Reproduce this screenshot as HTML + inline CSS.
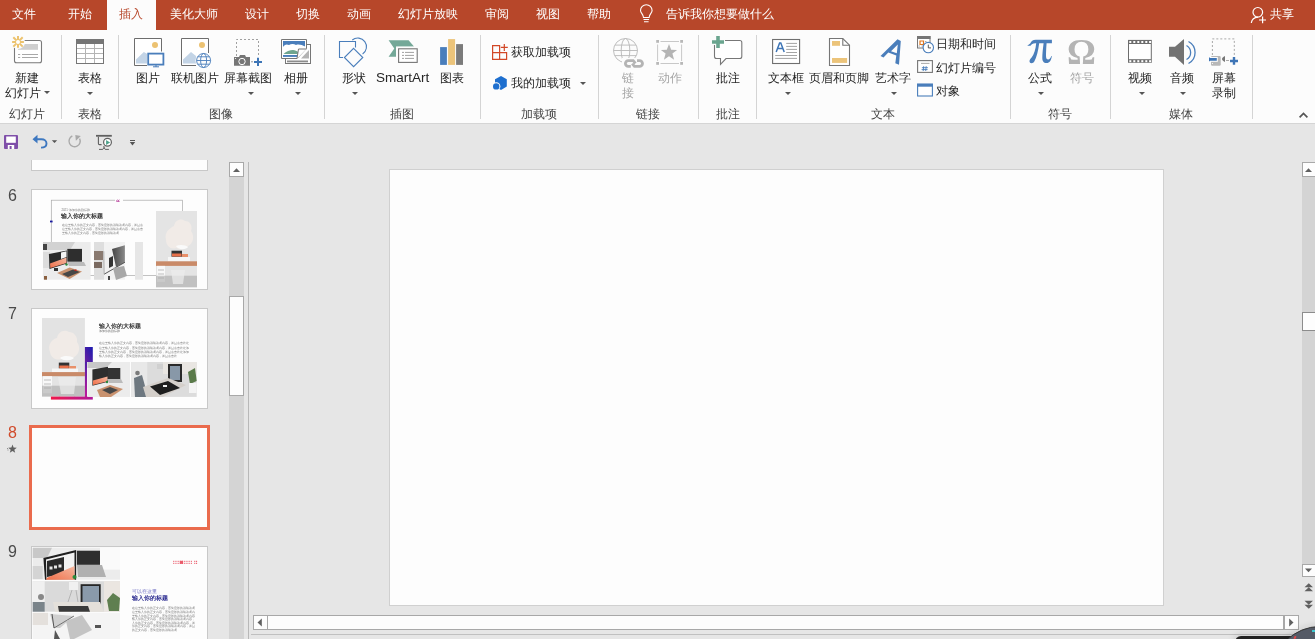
<!DOCTYPE html>
<html><head><meta charset="utf-8"><style>
html,body{margin:0;padding:0}
body{width:1315px;height:639px;overflow:hidden;background:#e6e6e6;font-family:"Liberation Sans",sans-serif;position:relative}
.a{position:absolute}
.t{position:absolute;font-size:12px;line-height:12px;white-space:nowrap;color:#262626;will-change:transform}
.tab{position:absolute;top:8px;font-size:12px;line-height:12px;color:#fff;white-space:nowrap;will-change:transform}
.sep{position:absolute;top:35px;width:1px;height:84px;background:#d4d4d4}
.gl{position:absolute;top:108px;font-size:12px;line-height:12px;color:#444;white-space:nowrap;will-change:transform}
.dd{position:absolute;width:0;height:0;border-left:3px solid transparent;border-right:3px solid transparent;border-top:3px solid #555}
.dis{color:#a6a6a6}
.thumb{position:absolute;left:31px;width:175px;height:99px;background:#fdfdfd;border:1px solid #c8c8c8;overflow:hidden}
.num{position:absolute;left:8px;font-size:16px;line-height:16px;color:#4a4a4a;will-change:transform}
svg{position:absolute;overflow:visible}
</style></head><body>

<!-- TAB BAR -->
<div class="a" style="left:0;top:0;width:1315px;height:30px;background:#b7472a"></div>
<div class="a" style="left:107px;top:0;width:49px;height:30px;background:#fcfcfc"></div>
<div class="tab" style="left:12px">文件</div>
<div class="tab" style="left:68px">开始</div>
<div class="tab" style="left:119px;color:#b7472a">插入</div>
<div class="tab" style="left:170px">美化大师</div>
<div class="tab" style="left:245px">设计</div>
<div class="tab" style="left:296px">切换</div>
<div class="tab" style="left:347px">动画</div>
<div class="tab" style="left:398px">幻灯片放映</div>
<div class="tab" style="left:485px">审阅</div>
<div class="tab" style="left:536px">视图</div>
<div class="tab" style="left:587px">帮助</div>
<div class="tab" style="left:666px">告诉我你想要做什么</div>
<div class="tab" style="left:1270px">共享</div>

<!-- RIBBON -->
<div class="a" style="left:0;top:30px;width:1315px;height:93px;background:#fcfcfc"></div>
<div class="a" style="left:0;top:123px;width:1315px;height:1px;background:#d5d5d5"></div>

<div class="sep" style="left:61px"></div>
<div class="sep" style="left:118px"></div>
<div class="sep" style="left:324px"></div>
<div class="sep" style="left:480px"></div>
<div class="sep" style="left:598px"></div>
<div class="sep" style="left:698px"></div>
<div class="sep" style="left:756px"></div>
<div class="sep" style="left:1010px"></div>
<div class="sep" style="left:1110px"></div>
<div class="sep" style="left:1252px"></div>

<!-- group labels -->
<div class="gl" style="left:9px">幻灯片</div>
<div class="gl" style="left:78px">表格</div>
<div class="gl" style="left:209px">图像</div>
<div class="gl" style="left:390px">插图</div>
<div class="gl" style="left:521px">加载项</div>
<div class="gl" style="left:636px">链接</div>
<div class="gl" style="left:716px">批注</div>
<div class="gl" style="left:871px">文本</div>
<div class="gl" style="left:1048px">符号</div>
<div class="gl" style="left:1169px">媒体</div>

<!-- button labels -->
<div class="t" style="left:15px;top:72px">新建</div>
<div class="t" style="left:5px;top:87px">幻灯片</div>
<div class="dd" style="left:44px;top:91px"></div>
<div class="t" style="left:78px;top:72px">表格</div>
<div class="dd" style="left:87px;top:92px"></div>
<div class="t" style="left:136px;top:72px">图片</div>
<div class="t" style="left:171px;top:72px">联机图片</div>
<div class="t" style="left:224px;top:72px">屏幕截图</div>
<div class="dd" style="left:248px;top:92px"></div>
<div class="t" style="left:284px;top:72px">相册</div>
<div class="dd" style="left:295px;top:92px"></div>
<div class="t" style="left:342px;top:72px">形状</div>
<div class="dd" style="left:352px;top:92px"></div>
<div class="t" style="left:376px;top:71px;font-size:13.5px;line-height:14px">SmartArt</div>
<div class="t" style="left:440px;top:72px">图表</div>
<div class="t" style="left:511px;top:46px">获取加载项</div>
<div class="t" style="left:511px;top:77px">我的加载项</div>
<div class="dd" style="left:580px;top:82px"></div>
<div class="t dis" style="left:622px;top:72px">链</div>
<div class="t dis" style="left:622px;top:87px">接</div>
<div class="t dis" style="left:658px;top:72px">动作</div>
<div class="t" style="left:716px;top:72px">批注</div>
<div class="t" style="left:768px;top:72px">文本框</div>
<div class="dd" style="left:785px;top:92px"></div>
<div class="t" style="left:809px;top:72px">页眉和页脚</div>
<div class="t" style="left:875px;top:72px">艺术字</div>
<div class="dd" style="left:891px;top:92px"></div>
<div class="t" style="left:936px;top:38px">日期和时间</div>
<div class="t" style="left:936px;top:62px">幻灯片编号</div>
<div class="t" style="left:936px;top:85px">对象</div>
<div class="t" style="left:1028px;top:72px">公式</div>
<div class="dd" style="left:1038px;top:92px"></div>
<div class="t dis" style="left:1070px;top:72px">符号</div>
<div class="a" style="left:1067px;top:32px;font-family:'Liberation Serif',serif;font-weight:bold;font-size:36px;line-height:40px;color:#b4b4b4">Ω</div>
<div class="t" style="left:1128px;top:72px">视频</div>
<div class="dd" style="left:1139px;top:92px"></div>
<div class="t" style="left:1170px;top:72px">音频</div>
<div class="dd" style="left:1180px;top:92px"></div>
<div class="t" style="left:1212px;top:72px">屏幕</div>
<div class="t" style="left:1212px;top:87px">录制</div>

<!-- LEFT PANEL -->
<div class="a" style="left:0;top:160px;width:229px;height:479px;overflow:hidden">
<div class="thumb" style="top:-90px"></div>
<div class="num" style="top:28px">6</div>
<div class="thumb" style="top:29px"></div>
<div class="num" style="top:146px">7</div>
<div class="thumb" style="top:148px"></div>
<div class="num" style="top:265px;color:#d04a2a">8</div>
<div class="a" style="left:29px;top:265px;width:175px;height:99px;border:3px solid #ea6b4d;background:#fdfdfd"></div>
<div class="num" style="top:384px">9</div>
<div class="thumb" style="top:386px"></div>
<!-- THUMBS -->
<svg width="229" height="479" viewBox="0 160 229 479" style="left:0;top:0">
<defs>
<linearGradient id="gb" x1="0" x2="1" y1="0" y2="0"><stop offset="0" stop-color="#f0194a"/><stop offset="1" stop-color="#b0189a"/></linearGradient>
<linearGradient id="gp" x1="1" x2="0" y1="0" y2="1"><stop offset="0" stop-color="#1a1ab0"/><stop offset="1" stop-color="#6a20a0"/></linearGradient>
<linearGradient id="gl" x1="0" x2="0" y1="0" y2="1"><stop offset="0" stop-color="#5020a8"/><stop offset="1" stop-color="#c0189a"/></linearGradient>
<linearGradient id="gm" x1="0" x2="1" y1="0" y2="0"><stop offset="0" stop-color="#444"/><stop offset="1" stop-color="#8a8a8a"/></linearGradient>
<linearGradient id="go" x1="0" x2="1" y1="1" y2="0"><stop offset="0" stop-color="#f0704a"/><stop offset="1" stop-color="#f5b8a0"/></linearGradient>
</defs>
<!-- ===== slide 6 ===== -->
<rect x="51.3" y="200.2" width="131.2" height="75.3" fill="none" stroke="#a8a8a8" stroke-width="0.7"/>
<rect x="115" y="197" width="8" height="6" fill="#fdfdfd"/>
<text x="116" y="204.5" font-family="Liberation Serif" font-weight="bold" font-size="8" fill="#b02a90">“</text>
<rect x="50" y="220.6" width="2.6" height="1.8" fill="#1a1aa0"/>
<text x="61.5" y="211.3" font-size="2.8" fill="#777" font-family="Liberation Sans">2021·添加你的副标题</text>
<text x="61.3" y="218.4" font-size="6.1" font-weight="bold" fill="#333" font-family="Liberation Sans">输入你的大标题</text>
<text x="61.5" y="226.3" font-size="3.05" fill="#777" font-family="Liberation Sans">在这里输入你的正文内容，言简意赅的说明该项内容，并且点</text>
<text x="61.5" y="229.9" font-size="3.05" fill="#777" font-family="Liberation Sans">这里输入你的正文内容，言简意赅的说明该项内容，并且点击</text>
<text x="61.5" y="233.5" font-size="3.05" fill="#777" font-family="Liberation Sans">里输入你的正文内容，言简意赅的说明该项</text>
<!-- img1 -->
<rect x="43" y="242" width="47.6" height="37.7" fill="#ececec"/>
<path d="M43,242 H75 L70,250 H43 Z" fill="#d2d2d2"/>
<rect x="43" y="244" width="4" height="6" fill="#444"/>
<path d="M43,252 H50 V268 H43 Z" fill="#dcdcdc"/>
<path d="M48.9,254.1 L67,250.5 V263.5 L49.5,269 Z" fill="#2a2a2a"/>
<path d="M61,252.5 L66.5,251.3 V257 L61,259 Z" fill="#f4f4f4"/>
<path d="M50,263.5 L66.5,257.5 V263 L50.3,268 Z" fill="url(#go)"/>
<rect x="54" y="268" width="4" height="3" fill="#333"/>
<rect x="67.3" y="248.9" width="14.7" height="12.8" fill="#2e2e2e"/>
<path d="M67,262 H84 L86,266 H69 Z" fill="#bbbbbb"/>
<circle cx="66.5" cy="264.5" r="1.2" fill="#2a8a3a"/>
<path d="M57.1,272.9 L69.6,267.6 L82,271.5 L69.6,279.1 Z" fill="#c9926f"/>
<path d="M62,274 L73,269.5 L80,272 L68,277 Z" fill="#474747"/>
<rect x="74.5" y="269.5" width="2" height="1.5" fill="#c02020"/>
<rect x="44" y="276" width="3" height="3.7" fill="#8a6040"/>
<!-- img2 -->
<rect x="94" y="242" width="31" height="37.7" fill="#f2f2f2"/>
<rect x="94" y="242" width="10" height="37.7" fill="#dedede"/>
<rect x="94" y="251" width="9" height="9" fill="#8a7a70"/>
<rect x="94" y="262" width="8" height="6" fill="#7a6a60"/>
<path d="M103.8,251.2 L124.9,245.3 V262.3 L104.2,274.2 Z" fill="#f0f0f0"/>
<path d="M112,249 L124.9,245.3 V262.3 L116,267 Z" fill="url(#gm)"/>
<path d="M109,258 L113,256 V266 L109,268 Z" fill="#333"/>
<path d="M104.2,274.2 L124.9,262.3" stroke="#333" stroke-width="0.8"/>
<path d="M103.8,251.2 L104.2,274.2" stroke="#888" stroke-width="0.6"/>
<path d="M113,268 L124,266 L127,276 L116,280 Z" fill="#a8a8a8"/>
<rect x="108" y="276" width="2" height="4" fill="#444"/>
<rect x="135" y="242" width="8" height="37.7" fill="#e6e6e6"/>
<!-- img3 -->
<rect x="156" y="211" width="41" height="76.3" fill="#e4e4e4"/>
<path d="M166,240 C164,232 170,228 174,226 C175,220 181,218 185,221 C190,221 193,226 191,231 C195,236 193,244 188,246 C186,250 180,250 176,248 C171,250 166,246 166,240 Z" fill="#f1ebe7"/><path d="M176,246 C180,244 186,245 188,247 C186,250 178,250 176,246 Z" fill="#fafafa"/>
<rect x="171.5" y="250.7" width="10.5" height="6" fill="#333"/>
<rect x="172" y="253.5" width="9.5" height="3" fill="#e8704a"/>
<rect x="182" y="254" width="6" height="5" fill="#e8906a"/>
<rect x="168" y="257" width="22" height="4.3" fill="#f6f6f6"/>
<rect x="156" y="261.3" width="41" height="4.6" fill="#c98a68"/>
<rect x="157" y="265.9" width="8" height="16" fill="#f8f8f8"/>
<path d="M158,270 H164 M158,274 H164 M158,278 H164" stroke="#999" stroke-width="0.6"/>

<rect x="156" y="275.7" width="41" height="11.6" fill="#a4a4a4" opacity="0.55"/>
<path d="M171,270 H185 L183,284 H173 Z" fill="#ececec" opacity="0.7"/>

<!-- ===== slide 7 ===== -->
<rect x="42" y="318" width="42.9" height="78.6" fill="#e3e3e3"/>
<path d="M50,352 C47,345 52,339 57,338 C58,332 64,329 69,332 C74,332 78,337 77,342 C81,347 79,355 74,357 C72,361 65,361 62,359 C56,361 51,358 50,352 Z" fill="#f1ebe7"/><path d="M60,358 C64,355 71,356 74,358 C71,361 63,361 60,358 Z" fill="#fafafa"/>
<rect x="58.8" y="362.6" width="10.5" height="6" fill="#333"/>
<rect x="59.3" y="365.5" width="9.5" height="3" fill="#e8704a"/>
<rect x="69" y="366" width="7" height="5" fill="#e8906a"/>
<rect x="52" y="368.5" width="26" height="3.6" fill="#f6f6f6"/>
<rect x="42" y="372.1" width="42.9" height="4.1" fill="#c98a68"/>
<rect x="43" y="376.2" width="9" height="17" fill="#f8f8f8"/>
<path d="M44,380 H51 M44,384 H51 M44,388 H51" stroke="#999" stroke-width="0.6"/>
<rect x="42" y="385.7" width="42.9" height="10.9" fill="#a4a4a4" opacity="0.55"/>
<path d="M58,377 H76 L74,394 H61 Z" fill="#ececec" opacity="0.7"/><path d="M61,394 L59,397 M73,394 L75,397" stroke="#bbb" stroke-width="0.5"/>
<rect x="84.9" y="347" width="7.9" height="15" fill="url(#gp)"/>
<rect x="84.9" y="362" width="2.1" height="35" fill="url(#gl)"/>
<rect x="50.9" y="396.6" width="41.9" height="3" fill="url(#gb)"/>
<!-- img2 -->
<rect x="87.5" y="362" width="42.5" height="34.9" fill="#ececec"/>
<path d="M87.5,362 H112 L106,368 H87.5 Z" fill="#c8c8c8"/>
<path d="M92.4,369.4 L108,366.7 V381.7 L92.4,385.7 Z" fill="#2e2e2e"/>
<path d="M93,380.5 L107.5,376.5 V381.3 L93,385 Z" fill="url(#go)"/>
<rect x="108" y="368" width="12.3" height="11" fill="#333"/>
<path d="M107,379 H121 L123,383 H109 Z" fill="#bbb"/>
<circle cx="107" cy="382" r="1.2" fill="#2a8a3a"/>
<path d="M97,390 L110,385 L123,389 L111,396.9 H100 Z" fill="#c9926f"/>
<path d="M102,390 L110,387 L118,390 L110,394 Z" fill="#474747"/>
<!-- img3 -->
<rect x="131.2" y="362" width="65.5" height="34.9" fill="#dcdcdc"/>
<rect x="131.2" y="362" width="16" height="34.9" fill="#e8e8e8"/>
<rect x="163" y="362" width="33.7" height="12" fill="#e9e6e2"/>
<path d="M134,378 L142,375 L148,396.9 H135 Z" fill="#6e7880"/>
<circle cx="137.5" cy="373" r="2.3" fill="#7a7a7a"/>
<rect x="157" y="364" width="6" height="5" fill="#d0d0d0"/>
<rect x="168" y="364" width="14" height="18" fill="#2a2a2a"/>
<rect x="170" y="366" width="10" height="14" fill="#8898a8"/>
<path d="M143,387 L168,378 L186,385 L163,396.9 H146 Z" fill="#d4cfca"/>
<path d="M150,386.5 L168,381 L180,388 L160,395 Z" fill="#1e1e1e"/>
<rect x="163" y="385" width="4" height="2" fill="#eee"/>
<path d="M188,372 L195,368 L196.7,381 L190,384 Z" fill="#5a7a4a"/>
<rect x="189" y="383" width="7.5" height="10" fill="#f4f4f4"/>
<text x="99.2" y="327.8" font-size="5.5" font-weight="bold" fill="#333" font-family="Liberation Sans">输入你的大标题</text>
<text x="99.3" y="332.3" font-size="3.2" fill="#666" font-family="Liberation Sans">添加你的副标题</text>
<text x="99.3" y="344.3" font-size="3.05" fill="#777" font-family="Liberation Sans">在这里输入你的正文内容，言简意赅的说明该项内容，并且点击此处</text>
<text x="99.3" y="348.6" font-size="3.05" fill="#777" font-family="Liberation Sans">这里输入你的正文内容，言简意赅的说明该项内容，并且点击此处添</text>
<text x="99.3" y="352.9" font-size="3.05" fill="#777" font-family="Liberation Sans">里输入你的正文内容，言简意赅的说明该项内容，并且点击此处添加</text>
<text x="99.3" y="357.2" font-size="3.05" fill="#777" font-family="Liberation Sans">输入你的正文内容，言简意赅的说明该项内容，并且点击此</text>

<!-- ===== slide 9 ===== -->
<rect x="32.7" y="547.7" width="87.3" height="32" fill="#ececec"/>
<path d="M32.7,547.7 H52 L47,558 H32.7 Z" fill="#c8c8c8"/>
<rect x="32.7" y="566" width="10" height="13" fill="#d4d4d4"/>
<rect x="100" y="547.7" width="20" height="22" fill="#fafafa"/>
<path d="M43.4,558.1 L76.1,550 V579.7 H45 Z" fill="#1e1e1e"/>
<path d="M46,559.5 L74.5,552.5 V579.7 H46.5 Z" fill="#f2f2f2"/>
<path d="M47,561 L64,557 V574 L47,577 Z" fill="#2a2a2a"/>
<rect x="49.5" y="566.5" width="3" height="3" fill="#e6e6e6"/><rect x="54" y="565.5" width="3" height="3" fill="#e6e6e6"/><rect x="58.5" y="564.5" width="3" height="3" fill="#e6e6e6"/>
<path d="M46.5,578 L74.5,566 V579.7 H46.5 Z" fill="url(#go)"/>
<rect x="76.9" y="550.7" width="23.1" height="14.1" fill="#2e2e2e"/>
<path d="M77,565 H102 L106,577 H78 Z" fill="#b0b0b0"/>
<circle cx="74.5" cy="577" r="2" fill="#2a8a3a"/>
<rect x="32.7" y="581.2" width="87.3" height="30.5" fill="#dadada"/>
<rect x="32.7" y="581.2" width="12" height="30.5" fill="#f0f0f0"/>
<rect x="104" y="581.2" width="16" height="30.5" fill="#ebe6e1"/>
<circle cx="41" cy="597" r="3" fill="#888"/>
<rect x="32.7" y="602" width="12" height="9.7" fill="#7a848a"/>
<rect x="69" y="582" width="9" height="8" fill="#f0f0f0"/>
<path d="M72,590 L68,602 M76,590 L78,602" stroke="#999" stroke-width="0.6"/>
<rect x="80.6" y="584.2" width="20.1" height="20.8" fill="#262626"/>
<rect x="82.5" y="586" width="16.5" height="17" fill="#8a9aaa"/>
<path d="M53,602 H100 L104,611.7 H55 Z" fill="#e4e0da"/>
<path d="M58,606 H88 L90,611.7 H59 Z" fill="#3a3a3a"/>
<path d="M107,600 L113,593 L120,598 L119,611 H109 Z" fill="#5f7f50"/>
<rect x="32.7" y="612.8" width="87.3" height="26.2" fill="#f4f4f4"/>
<path d="M32.7,612.8 H48 V625 H32.7 Z" fill="#e4e0dc"/>
<path d="M50,614 L74,616 L60,628 L54,628 Z" fill="#d0d0d0"/>
<path d="M52,614 L54,628" stroke="#333" stroke-width="0.8"/>
<path d="M54,628 L74,616" stroke="#333" stroke-width="0.6"/>
<path d="M66,621 L82,615 L92,630 L74,639 H70 Z" fill="#c4c4c4"/>
<rect x="95" y="625" width="6" height="3" fill="#555"/>
<path d="M55,630 L60,639 H54 Z" fill="#555"/>
<g fill="#ea5a6a">
<rect x="173.2" y="560.8" width="1.1" height="1.1"/>
<rect x="175.4" y="560.8" width="1.1" height="1.1"/>
<rect x="177.6" y="560.8" width="1.1" height="1.1"/>
<rect x="179.8" y="560.8" width="1.1" height="1.1"/>
<rect x="182.0" y="560.8" width="1.1" height="1.1"/>
<rect x="184.2" y="560.8" width="1.1" height="1.1"/>
<rect x="186.4" y="560.8" width="1.1" height="1.1"/>
<rect x="188.6" y="560.8" width="1.1" height="1.1"/>
<rect x="190.8" y="560.8" width="1.1" height="1.1"/>
<rect x="194.2" y="560.8" width="1.1" height="1.1"/>
<rect x="196.0" y="560.8" width="1.1" height="1.1"/>
<rect x="173.2" y="562.8" width="1.1" height="1.1"/>
<rect x="175.4" y="562.8" width="1.1" height="1.1"/>
<rect x="177.6" y="562.8" width="1.1" height="1.1"/>
<rect x="179.8" y="562.8" width="1.1" height="1.1"/>
<rect x="182.0" y="562.8" width="1.1" height="1.1"/>
<rect x="184.2" y="562.8" width="1.1" height="1.1"/>
<rect x="186.4" y="562.8" width="1.1" height="1.1"/>
<rect x="188.6" y="562.8" width="1.1" height="1.1"/>
<rect x="190.8" y="562.8" width="1.1" height="1.1"/>
<rect x="194.2" y="562.8" width="1.1" height="1.1"/>
<rect x="196.0" y="562.8" width="1.1" height="1.1"/>
<rect x="179.8" y="560.8" width="3.3" height="3.1"/>
</g>
<text x="132.2" y="593" font-size="5" fill="#7a7ac8" font-family="Liberation Sans">可以在这里</text>
<text x="132" y="599.6" font-size="6" font-weight="bold" fill="#2b2b90" font-family="Liberation Sans">输入你的标题</text>
<text x="132.2" y="609.3" font-size="3.05" fill="#777" font-family="Liberation Sans">在这里输入你的正文内容，言简意赅的说明该项</text>
<text x="132.2" y="612.9" font-size="3.05" fill="#777" font-family="Liberation Sans">这里输入你的正文内容，言简意赅的说明该项内</text>
<text x="132.2" y="616.5" font-size="3.05" fill="#777" font-family="Liberation Sans">里输入你的正文内容，言简意赅的说明该项内容</text>
<text x="132.2" y="620.1" font-size="3.05" fill="#777" font-family="Liberation Sans">输入你的正文内容，言简意赅的说明该项内容，</text>
<text x="132.2" y="623.7" font-size="3.05" fill="#777" font-family="Liberation Sans">入你的正文内容，言简意赅的说明该项内容，并</text>
<text x="132.2" y="627.3" font-size="3.05" fill="#777" font-family="Liberation Sans">你的正文内容，言简意赅的说明该项内容，并且</text>
<text x="132.2" y="630.9" font-size="3.05" fill="#777" font-family="Liberation Sans">的正文内容，言简意赅的说明该项</text>
</svg>
<!-- /THUMBS -->
</div>
<!-- QAT -->

<!-- panel scrollbar -->
<div class="a" style="left:229px;top:162px;width:15px;height:477px;background:#d4d4d4"></div>
<div class="a" style="left:229px;top:162px;width:13px;height:13px;background:#fdfdfd;border:1px solid #a8a8a8"></div>
<div class="a" style="left:229px;top:296px;width:13px;height:98px;background:#fdfdfd;border:1px solid #a8a8a8"></div>
<div class="a" style="left:248px;top:162px;width:1px;height:477px;background:#b8b8b8"></div>

<!-- MAIN SLIDE -->
<div class="a" style="left:389px;top:169px;width:773px;height:435px;background:#fdfdfd;border:1px solid #d0d0d0"></div>

<!-- right scrollbar -->
<div class="a" style="left:1302px;top:162px;width:13px;height:415px;background:#d4d4d4"></div>
<div class="a" style="left:1302px;top:162px;width:13px;height:13px;background:#fdfdfd;border:1px solid #a8a8a8"></div>
<div class="a" style="left:1302px;top:312px;width:13px;height:17px;background:#fdfdfd;border:1px solid #8c8c8c"></div>
<div class="a" style="left:1302px;top:564px;width:13px;height:11px;background:#fdfdfd;border:1px solid #a8a8a8"></div>

<!-- horizontal scrollbar -->
<div class="a" style="left:253px;top:615px;width:1044px;height:13px;background:#fdfdfd;border:1px solid #a8a8a8"></div>
<div class="a" style="left:267px;top:615px;width:1px;height:15px;background:#a8a8a8"></div>
<div class="a" style="left:1283px;top:615px;width:2px;height:15px;background:#a8a8a8"></div>
<div class="a" style="left:251px;top:634px;width:1064px;height:1px;background:#c0c0c0"></div>

<!-- ICONS -->
<svg width="1315" height="639" style="left:0;top:0">
<!-- tab bar: lightbulb -->
<g fill="none" stroke="#fff" stroke-width="1.1">
<path d="M643.5,17.5 C643.5,14.5 640.5,13 640.5,10.5 A5.8,5.8 0 0 1 652.1,10.5 C652.1,13 649.1,14.5 649.1,17.5 Z"/>
<path d="M643.5,19.5 H649.1 M644,21.7 H648.6"/>
</g>
<!-- share person -->
<g fill="none" stroke="#fff" stroke-width="1.2">
<circle cx="1257.8" cy="12.3" r="4.8"/>
<path d="M1251.3,23 C1251.8,19.5 1254.5,17.2 1258,17.1"/>
<path d="M1259,20 H1266 M1262.6,16.6 V23.2"/>
</g>

<!-- New slide -->
<rect x="14.5" y="40.5" width="27" height="22.3" rx="2" fill="#fff" stroke="#7a7a7a" stroke-width="1.1"/>
<rect x="18" y="44" width="20" height="5.8" fill="#cfcfcf"/>
<path d="M18,54.5 H20.2 M22,54.5 H38 M18,57.5 H20.2 M22,57.5 H38" stroke="#a8a8a8" stroke-width="1"/>
<circle cx="18" cy="42" r="7" fill="#fcfcfc"/>
<g stroke="#ecc36f" stroke-width="2">
<path d="M18,36.1 V47.7 M12.1,41.9 H23.9 M13.3,37.2 L22.7,46.6 M13.3,46.6 L22.7,37.2"/>
</g>
<circle cx="18" cy="41.9" r="2" fill="#fff"/>

<!-- Table -->
<rect x="76.5" y="39.5" width="27" height="24" fill="#fff" stroke="#767676" stroke-width="1"/>
<rect x="76" y="39" width="28" height="5" fill="#767676"/>
<path d="M85.5,44 V63 M94.5,44 V63 M77,48.5 H103 M77,53.5 H103 M77,58.5 H103" stroke="#b4b4b4" stroke-width="1"/>

<!-- Picture -->
<path d="M147,65.5 H134.5 V38.5 H161.5 V51.5" fill="#fff" stroke="#6d6d6d" stroke-width="1"/>
<circle cx="155" cy="45" r="3" fill="#ecc272"/>
<path d="M136,63.5 V59.5 L143.8,52 L147,53.8 V63.5 Z" fill="#c3d4e6"/>
<rect x="148.2" y="53.6" width="15.2" height="11" fill="#fff" stroke="#4a7ebb" stroke-width="1.8"/>
<path d="M153,66.8 H159 M155,66 H157" stroke="#4a7ebb" stroke-width="1"/>

<!-- Online picture -->
<path d="M196,65.5 H181.5 V38.5 H208.5 V53" fill="#fff" stroke="#6d6d6d" stroke-width="1"/>
<circle cx="202" cy="45" r="3" fill="#ecc272"/>
<path d="M183,63.5 V59.5 L191,52 L196,56 V63.5 Z" fill="#c3d4e6"/>
<circle cx="203.6" cy="60.5" r="8.2" fill="#fcfcfc"/>
<g fill="none" stroke="#4a7ebb" stroke-width="0.9">
<circle cx="203.6" cy="60.5" r="7"/>
<ellipse cx="203.6" cy="60.5" rx="3" ry="7"/>
<path d="M196.6,60.5 H210.6 M197.6,56.8 H209.6 M197.6,64.2 H209.6"/>
</g>

<!-- Screenshot -->
<path d="M236.5,56 V39.5 H258.5 V56" fill="none" stroke="#a0a0a0" stroke-width="1" stroke-dasharray="2,2"/>
<path d="M234,57 H239 L240,55 H245 L246,57 H250 V65.8 H234 Z" fill="#767676"/>
<circle cx="242" cy="61.5" r="3.2" fill="none" stroke="#fff" stroke-width="1"/>
<circle cx="235.5" cy="58.5" r="0.6" fill="#fff"/>
<path d="M251,61.8 H253" stroke="#999" stroke-width="1"/>
<path d="M254,61.9 H262 M258,57.8 V66" stroke="#3e75b6" stroke-width="2"/>

<!-- Album -->
<rect x="285.5" y="44.5" width="25" height="19" fill="#fff" stroke="#767676" stroke-width="1"/>
<rect x="287" y="60.5" width="21" height="1.8" fill="#8c8c8c"/>
<path d="M301,58.5 L309,50 V58.5 Z" fill="#b4b4b4"/>
<path d="M281.5,39.5 H306.5 V48.5 L297,58.5 H281.5 Z" fill="#fff" stroke="#767676" stroke-width="1"/>
<rect x="283" y="41" width="22" height="5.8" fill="#4a7ebb"/>
<path d="M283,47 C285,44 287,44 289,45 C291,43.5 294,43.5 296,45 C299,44 302,45 305,46.5 V48 H283 Z" fill="#fff"/>
<path d="M283.5,54 C286,51.5 290,50 293,50 C295,50 297,51 298,52 V54 Z" fill="#6fa58f"/>
<rect x="283" y="55" width="14" height="1.9" fill="#4a7ebb"/>
<path d="M297,58.5 L298.5,49 H306.5" fill="#fff" stroke="#767676" stroke-width="1"/>

<!-- Shapes -->
<g fill="none" stroke="#4a7ebb" stroke-width="1.1">
<path d="M343,57.5 H339.5 V41.5 H355.5 V47.5"/>
<path d="M352.3,40 A8.7,8.7 0 1 1 362.6,54"/>
<path d="M353.6,48.3 L362.8,57.5 L353.6,66.7 L344.4,57.5 Z"/>
</g>

<!-- SmartArt -->
<path d="M388.6,40.2 H408.6 L414,46.6 H396 V56.8 H388.6 L394.3,48.5 Z" fill="#74a898"/>
<rect x="396.5" y="46.8" width="22.5" height="17.5" fill="#fcfcfc"/>
<rect x="398.6" y="48.8" width="18.6" height="13.6" fill="#fff" stroke="#767676" stroke-width="1.1"/>
<path d="M402,52.4 H404 M405,52.4 H414 M402,55.4 H404 M405,55.4 H414 M402,58.4 H404 M405,58.4 H414" stroke="#a0a0a0" stroke-width="1"/>

<!-- Chart -->
<rect x="440.1" y="47.1" width="6.8" height="17.8" fill="#4a7ebb"/>
<rect x="448.1" y="39.1" width="7" height="25.8" fill="#ecc47a"/>
<rect x="456.1" y="44.1" width="6.9" height="20.8" fill="#7b7b7b"/>

<!-- Get add-ins -->
<g fill="none" stroke="#d24726" stroke-width="1.2">
<path d="M492.6,45.6 H499.6 V59.4 H492.6 Z M492.6,52.6 H506.6 V59.4 H499.6"/>
<path d="M500.8,47.4 H507.8 M504.3,43.9 V50.9"/>
</g>
<!-- My add-ins -->
<path d="M501,75.9 L506.8,79.3 V86.5 L501,89.9 L495,86.5 V79.3 Z" fill="#1e6fcf"/>
<circle cx="496.2" cy="86.4" r="4.2" fill="#fcfcfc"/>
<circle cx="496.2" cy="86.4" r="3.2" fill="#1e6fcf"/>

<!-- Link (disabled) -->
<g fill="none" stroke="#b8b8b8" stroke-width="0.9">
<circle cx="625.5" cy="50.5" r="12"/>
<ellipse cx="625.5" cy="50.5" rx="4.3" ry="12"/>
<path d="M613.5,50.5 H637.5 M615,45.1 H636 M615,55.6 H636"/>
</g>
<path d="M622,58 H646 V69 H622 Z" fill="#fcfcfc"/>
<g fill="none" stroke="#b4b4b4" stroke-width="2.8">
<path d="M635.5,63.4 L633.2,60.6 H628.3 A2.9,2.9 0 0 0 628.3,66.4 H630.8"/>
<path d="M632.2,63.6 L634.5,66.4 H639.6 A2.9,2.9 0 0 0 639.6,60.6 H637"/>
</g>

<!-- Action (disabled) -->
<g fill="#b8b8b8">
<rect x="656.2" y="40" width="2.8" height="2.8"/>
<rect x="680.2" y="40" width="2.8" height="2.8"/>
<rect x="656.2" y="62" width="2.8" height="2.8"/>
<rect x="680.2" y="62" width="2.8" height="2.8"/>
</g>
<path d="M660.5,41.5 H679 M660.5,63.5 H679 M657.6,44.5 V61 M681.6,44.5 V61" stroke="#c8c8c8" stroke-width="1"/>
<path d="M669,44.1 L671.2,49.8 L677.1,49.9 L672.4,53.6 L674.1,59.8 L669,56.3 L663.9,59.8 L665.6,53.6 L660.9,49.9 L666.8,49.8 Z" fill="#b4b4b4"/>

<!-- Comment -->
<path d="M714.5,45 V56.5 Q714.5,58.5 716.5,58.5 H720.5 V64.4 L726,58.5 H739.8 Q741.8,58.5 741.8,56.5 V42.5 Q741.8,40.5 739.8,40.5 H725" fill="#fff" stroke="#777" stroke-width="1.1"/>
<path d="M718,36 V48 M712,42 H724" stroke="#6aa58f" stroke-width="3.6"/>

<!-- Text box -->
<rect x="772.6" y="39.5" width="27" height="24" fill="#fff" stroke="#6f6f6f" stroke-width="1.1"/>
<path d="M776.2,51.9 L779.6,42.9 H780.8 L784.2,51.9 M777.6,48.6 H782.8" fill="none" stroke="#3e75b6" stroke-width="1.5"/>
<path d="M786.2,43.4 H797 M786.2,46.4 H797 M786.2,49.4 H797 M786.2,52.5 H797 M775.2,55.5 H797 M775.2,58.4 H797" stroke="#a4a4a4" stroke-width="1"/>

<!-- Header footer -->
<path d="M829.5,38.5 H842.8 L849.5,45.2 V65.5 H829.5 Z" fill="#fff" stroke="#767676" stroke-width="1.1"/>
<path d="M842.8,38.5 V45.2 H849.5" fill="none" stroke="#767676" stroke-width="1.1"/>
<rect x="832" y="41" width="8" height="4.8" fill="#ecc47a"/>
<rect x="832" y="58" width="15.1" height="4.9" fill="#ecc47a"/>

<!-- WordArt -->
<path fill-rule="evenodd" d="M880.5,56 L897.5,39.3 L900.8,41 L899,64.8 L895.3,63.3 L896.3,55.6 L888.3,52.6 L883.5,57.5 Z M891,51.2 L896.8,53.3 L897.8,44.5 Z" fill="#4a7ebb"/>

<!-- Date time -->
<rect x="917.5" y="36.5" width="12.5" height="11.5" fill="#fff" stroke="#767676" stroke-width="1"/>
<rect x="917" y="36" width="13.5" height="3" fill="#767676"/>
<path d="M920,41 H923.5 V44.5 H920 Z" fill="none" stroke="#e0771f" stroke-width="1.2"/>
<path d="M925,41.5 H926.5 M918.5,46 H920 M921.5,46 H923" stroke="#aaa" stroke-width="1"/>
<circle cx="928.3" cy="47.6" r="5.2" fill="#fff" stroke="#4a7ebb" stroke-width="1.1"/>
<path d="M928.3,44.6 V47.9 H931" fill="none" stroke="#444" stroke-width="0.9"/>

<!-- Slide number -->
<rect x="917.6" y="60.6" width="14.8" height="11.8" fill="#fff" stroke="#767676" stroke-width="1.1"/>
<path d="M921,63.4 H929.5" stroke="#a0a0a0" stroke-width="0.9"/>
<path d="M923.7,66.2 L923.2,71 M926.2,66.2 L925.7,71 M921.9,67.7 H927.9 M921.6,69.6 H927.6" stroke="#4a7ebb" stroke-width="0.9"/>

<!-- Object -->
<rect x="917.6" y="84.2" width="14.8" height="11.8" fill="#fff" stroke="#4a7ebb" stroke-width="1.1"/>
<rect x="917" y="83.7" width="16" height="3" fill="#4a7ebb"/>

<!-- Pi -->
<path d="M1030.2,43.5 C1031.2,41.3 1032.7,39.8 1035.8,39.8 H1051.9 V43.3 H1046.6 C1046.2,48 1046,52.5 1046,56 C1046,58.5 1046.8,59.5 1048.2,59.5 C1049.5,59.5 1050.6,58.2 1051.3,56.1 H1051.8 C1051.2,60.8 1049.6,63.1 1046.6,63.1 C1043.4,63.1 1042.3,61 1042.3,57.8 C1042.3,53.5 1043,48.5 1043.6,43.3 H1039.2 C1038.2,51 1036.6,57.5 1034.3,61.5 C1033.6,62.7 1032.7,63.2 1031.6,63.2 C1030.3,63.2 1029.5,62.3 1029.5,61.2 C1029.5,59.8 1030.5,58.5 1031.8,57.2 C1034,54.5 1035.6,49.5 1036.2,43.3 H1035.2 C1032.8,43.3 1031.5,44.4 1030.5,45.8 H1027.2 Z" fill="#4a7ebb"/>

<!-- Video -->
<rect x="1128" y="39.9" width="23.8" height="22.9" fill="#6d6d6d"/>
<rect x="1129" y="44" width="21.8" height="15.2" fill="#fff"/>
<g fill="#fff">
<rect x="1129.3" y="41" width="2" height="2"/><rect x="1133.3" y="41" width="2" height="2"/><rect x="1137.3" y="41" width="2" height="2"/><rect x="1141.3" y="41" width="2" height="2"/><rect x="1145.3" y="41" width="2" height="2"/><rect x="1149.1" y="41" width="2" height="2"/>
<rect x="1129.3" y="60.2" width="2" height="2"/><rect x="1133.3" y="60.2" width="2" height="2"/><rect x="1137.3" y="60.2" width="2" height="2"/><rect x="1141.3" y="60.2" width="2" height="2"/><rect x="1145.3" y="60.2" width="2" height="2"/><rect x="1149.1" y="60.2" width="2" height="2"/>
</g>

<!-- Audio -->
<path d="M1169,46.8 H1175 L1184,38.9 V65.1 L1175,56.7 H1169 Z" fill="#737373"/>
<g fill="none" stroke="#4a7ebb" stroke-width="1.3">
<path d="M1186.5,45.5 A8,8 0 0 1 1186.5,59.5"/>
<path d="M1188.5,41.5 A12.5,12.5 0 0 1 1188.5,63.5"/>
</g>

<!-- Screen recording -->
<path d="M1212.4,55 V38.9 H1234.3 V56" fill="none" stroke="#a8a8a8" stroke-width="1" stroke-dasharray="2,2"/>
<rect x="1211" y="55.9" width="9.7" height="9.8" rx="1.2" fill="#b8b8b8"/>
<rect x="1208.5" y="57" width="9.3" height="4.8" fill="#fcfcfc"/>
<path d="M1209,57.3 L1210.3,58 H1216.8 V60.8 H1210.3 L1209,61.6 Z" fill="#3e75b6"/>
<circle cx="1212.5" cy="63.5" r="0.6" fill="#fff"/>
<path d="M1225,56.1 C1223,57 1222,58 1222,59 C1222,60 1223,61 1225,61.9 Z" fill="#777"/>
<path d="M1226,60.5 H1229" stroke="#aaa" stroke-width="1"/>
<path d="M1230,61 H1238 M1234,57 V64.8" stroke="#3e75b6" stroke-width="2.4"/>

<!-- Collapse ribbon -->
<path d="M1299.6,117.3 L1303.5,113.4 L1307.4,117.3" fill="none" stroke="#555" stroke-width="1.7"/>

<!-- QAT -->
<rect x="4" y="135" width="14" height="14" rx="1" fill="#7f4fa9"/>
<rect x="6.2" y="136.5" width="9.6" height="6.3" fill="#fff"/>
<rect x="7.8" y="145" width="6.4" height="4" fill="#fff"/>
<rect x="9.6" y="146" width="2" height="3" fill="#7f4fa9"/>
<path d="M34.5,139.2 H41.5 C44.5,139.2 46.5,141 46.5,143.4 C46.5,145.8 44.5,147.6 41,147.6" fill="none" stroke="#3e78c0" stroke-width="1.9"/>
<path d="M32.5,139.2 L37.5,134.8 V143.6 Z" fill="#3e78c0"/>
<path d="M51.8,140.2 H57.2 L54.5,143 Z" fill="#555"/>
<path d="M72.3,136 A5.6,5.6 0 1 0 79.6,138.6" fill="none" stroke="#a9a9a9" stroke-width="1.4"/>
<path d="M75.3,135.1 L80.8,136.1 L75.9,140.7 Z" fill="#a9a9a9"/>
<path d="M96,135.8 H111.8" stroke="#606060" stroke-width="1.8"/>
<path d="M98.4,136.7 V143.5 Q98.4,144.6 99.5,144.6 H101.6" fill="none" stroke="#606060" stroke-width="1.1"/>
<circle cx="107.5" cy="142.3" r="3.9" fill="#fff" stroke="#606060" stroke-width="1.2"/>
<path d="M106.1,139.9 L110.1,142.5 L106.1,145 Z" fill="#4ba18a"/>
<path d="M99,149.4 H102.8 L104,147.5 L105.2,149.4 H108.9 M103.8,146 L104.2,147.8" stroke="#606060" stroke-width="1" fill="none"/>
<path d="M130,140.5 H135" stroke="#555" stroke-width="1"/>
<path d="M129.8,142 H135.2 L132.5,145.6 Z" fill="#555"/>

<!-- panel scrollbar arrows -->
<path d="M233,172 L236.5,168.3 L240,172 Z" fill="#606060"/>
<!-- right scrollbar arrows -->
<path d="M1305,172 L1308.5,168.3 L1312,172 Z" fill="#606060"/>
<path d="M1305,568.5 L1308.5,572.2 L1312,568.5 Z" fill="#606060"/>
<path d="M1304.5,587.3 L1308.8,583.2 L1313,587.3 Z M1304.5,591.3 L1308.8,587.2 L1313,591.3 Z" fill="#606060"/>
<path d="M1304.5,600.7 L1308.8,604.8 L1313,600.7 Z M1304.5,604.7 L1308.8,608.8 L1313,604.7 Z" fill="#606060"/>
<path d="M261.8,618.5 L257.5,622.5 L261.8,626.5 Z" fill="#606060"/>
<path d="M1289.2,618.5 L1293.5,622.5 L1289.2,626.5 Z" fill="#606060"/>
<!-- star under 8 -->
<path d="M12.5,444.6 L13.6,447.6 L16.8,447.7 L14.3,449.7 L15.2,452.8 L12.5,451 L9.8,452.8 L10.7,449.7 L8.2,447.7 L11.4,447.6 Z" fill="#606060"/>
<path d="M7,448.5 H8 M7.5,450 H8.5" stroke="#777" stroke-width="0.8"/>
</svg>
<!-- /ICONS -->
<div class="a" style="left:1235px;top:636px;width:90px;height:12px;border-radius:6px;background:#222;box-shadow:0 0 6px 3px rgba(0,0,0,0.08)"></div>
<div class="a" style="left:1272px;top:626px;width:94px;height:94px;border-radius:50%;background:#545a66;border:1px solid #333;box-shadow:0 0 5px 3px rgba(0,0,0,0.07)"></div>
<div class="a" style="left:1312px;top:630px;width:3px;height:2px;background:#3cc8d0"></div>
<div class="a" style="left:1294px;top:636px;width:2px;height:3px;background:#e04848;transform:rotate(30deg)"></div>

</body></html>
